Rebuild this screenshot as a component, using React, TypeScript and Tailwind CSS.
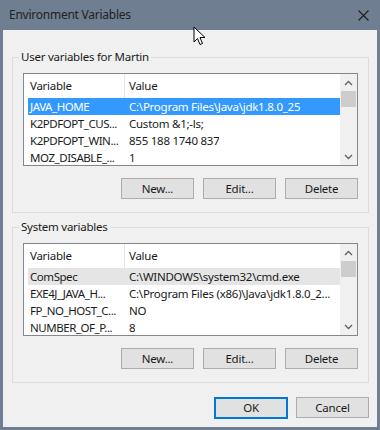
import React from 'react'

type Row = { name: string; value: string }

const userRows: Row[] = [
  { name: 'JAVA_HOME', value: 'C:\\Program Files\\Java\\jdk1.8.0_25' },
  { name: 'K2PDFOPT_CUS...', value: 'Custom &1;-ls;' },
  { name: 'K2PDFOPT_WIN...', value: '855 188 1740 837' },
  { name: 'MOZ_DISABLE_...', value: '1' },
]

const systemRows: Row[] = [
  { name: 'ComSpec', value: 'C:\\WINDOWS\\system32\\cmd.exe' },
  { name: 'EXE4J_JAVA_H...', value: 'C:\\Program Files (x86)\\Java\\jdk1.8.0_2...' },
  { name: 'FP_NO_HOST_C...', value: 'NO' },
  { name: 'NUMBER_OF_P...', value: '8' },
]

function Chevron({ up }: { up: boolean }) {
  return (
    <svg width="9" height="6" viewBox="0 0 9 6" className="text-[#606060]">
      <path d={up ? 'M1 5 L4.5 1.5 L8 5' : 'M1 1 L4.5 4.5 L8 1'} fill="none" stroke="currentColor" strokeWidth="1.3" />
    </svg>
  )
}

function ListView({ rows, active }: { rows: Row[]; active: boolean }) {
  return (
    <div className="flex h-[93px] w-full min-w-0 overflow-hidden border border-[#828790] bg-white">
      <div className="min-w-0 flex-1 overflow-hidden">
        <div className="flex h-[24px] items-center">
          <div className="w-[100px] pl-[6px]">Variable</div>
          <div className="h-full w-px bg-[#e5e5e5]" />
          <div className="pl-[4px]">Value</div>
        </div>
        <div className="pl-[4px]">
          {rows.map((r, i) => {
            const sel = i === 0
            const cls = sel
              ? active
                ? 'bg-[#3399ff] text-white'
                : 'bg-[#e5e5e5]'
              : ''
            return (
              <div key={r.name} className={`flex h-[17px] items-center whitespace-nowrap ${cls}`}>
                <div className="w-[98px] shrink-0 overflow-hidden pl-[2px] tracking-[-0.45px]">{r.name}</div>
                <div className="min-w-0 overflow-hidden pl-[3px]">{r.value}</div>
              </div>
            )
          })}
        </div>
      </div>
      <div className="flex w-[17px] shrink-0 flex-col bg-[#f0f0f0]">
        <div className="flex h-[17px] items-center justify-center">
          <Chevron up />
        </div>
        <div className="mx-px h-[16px] bg-[#cdcdcd]" />
        <div className="flex-1" />
        <div className="flex h-[17px] items-center justify-center">
          <Chevron up={false} />
        </div>
      </div>
    </div>
  )
}

function Button({ label, primary }: { label: string; primary?: boolean }) {
  return (
    <button
      type="button"
      className={`flex items-center justify-center bg-[#e1e1e1] ${
        primary ? 'h-[22px] w-[74px] border-2 border-[#0078d7]' : 'h-[21px] w-[73px] border border-[#adadad]'
      }`}
    >
      {label}
    </button>
  )
}

function Group({ title, rows, active, className }: { title: string; rows: Row[]; active: boolean; className?: string }) {
  return (
    <fieldset className={`min-w-0 border border-[#dcdcdc] ${className ?? ''}`}>
      <legend className="ml-[6px] px-[2px] leading-[16px]">{title}</legend>
      <div className="px-[10px] pt-[8px] pb-[13px]">
        <ListView rows={rows} active={active} />
        <div className="mt-[12px] flex justify-end gap-[9px]">
          <Button label="New..." />
          <Button label="Edit..." />
          <Button label="Delete" />
        </div>
      </div>
    </fieldset>
  )
}

export default function App() {
  return (
    <div
      className="relative flex h-[430px] w-[380px] flex-col bg-[#6f7e90] text-[11.5px] tracking-[-0.25px] text-[#1a1a1a]"
      style={{ fontFamily: '"Noto Sans", "Open Sans", sans-serif' }}
    >
      <div className="flex h-[30px] items-center justify-between pl-[9px] pr-[11px] text-[#222]">
        <span className="text-[12px]">Environment Variables</span>
        <svg width="11" height="11" viewBox="0 0 11 11">
          <path d="M0.5 0.5 L10.5 10.5 M10.5 0.5 L0.5 10.5" stroke="#1e1e1e" strokeWidth="1.1" />
        </svg>
      </div>
      <div className="mx-[3px] mb-[3px] flex min-w-0 flex-1 flex-col bg-[#f0f0f0] pl-[9px] pr-[8px] pt-[19px]">
        <Group title="User variables for Martin" rows={userRows} active />
        <Group title="System variables" rows={systemRows} active={false} className="mt-[6px]" />
        <div className="mt-[14px] flex justify-end gap-[8px]">
          <Button label="OK" primary />
          <Button label="Cancel" />
        </div>
      </div>
      <svg className="absolute left-[193px] top-[26px]" width="13" height="20" viewBox="0 0 13 20">
        <path
          d="M1 1 L1 16 L4.5 12.5 L7 18.5 L9.5 17.5 L7 11.5 L12 11.5 Z"
          fill="white"
          stroke="black"
          strokeWidth="1"
          strokeLinejoin="round"
        />
      </svg>
    </div>
  )
}
